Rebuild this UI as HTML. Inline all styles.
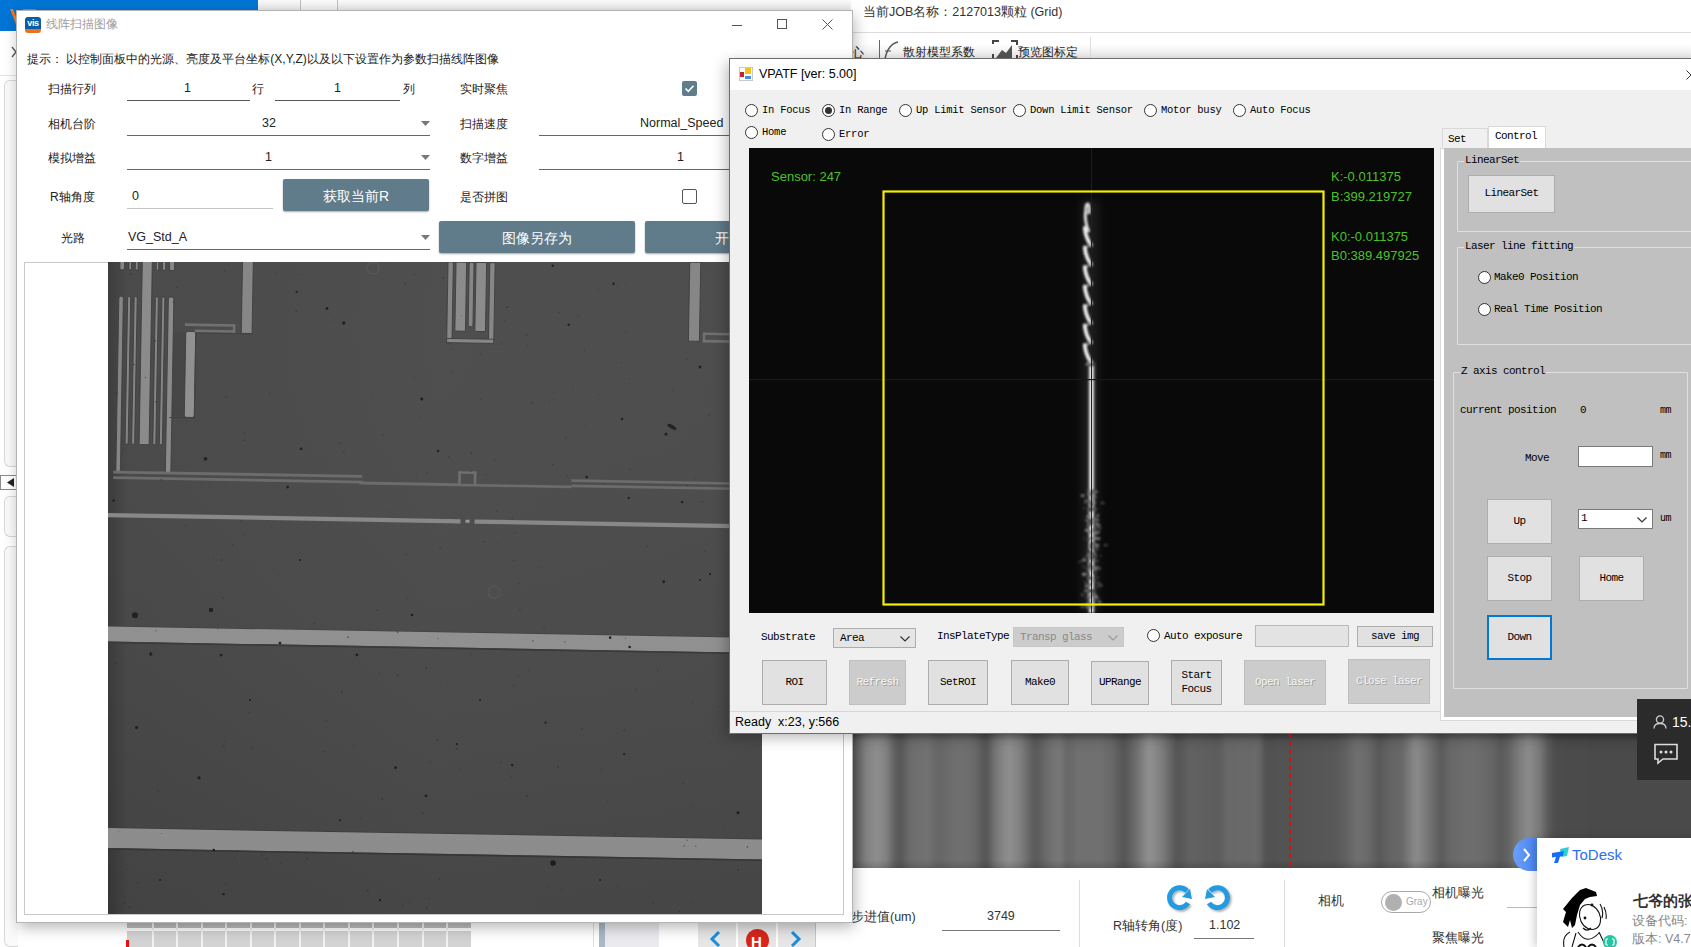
<!DOCTYPE html>
<html><head><meta charset="utf-8">
<style>
*{box-sizing:border-box;margin:0;padding:0}
html,body{width:1691px;height:947px;overflow:hidden;background:#fff}
body{position:relative;font-family:"Liberation Sans",sans-serif;font-size:13px;color:#222}
.a{position:absolute}
.mono{font-family:"Liberation Mono",monospace}
.t{position:absolute;white-space:nowrap;line-height:1}
</style></head><body>

<!-- ============ BACKGROUND APP ============ -->
<div class="a" style="left:0;top:0;width:258px;height:31px;background:#0175d5"></div>
<div class="a" style="left:258px;top:0;width:593px;height:11px;background:linear-gradient(#fafafa,#e6e6e6);border-bottom:1px solid #9a9a9a"></div>
<div class="a" style="left:300px;top:0;width:38px;height:11px;border:1px solid #bdbdbd;border-top:none;background:linear-gradient(#fbfbfb,#ececec)"></div>
<div class="t" style="left:863px;top:6px;font-size:12.5px;color:#333">当前JOB名称：2127013颗粒 (Grid)</div>
<div class="a" style="left:851px;top:32px;width:840px;height:28px;border-top:1px solid #dcdcdc;border-bottom:2px solid #8e8e8e;background:linear-gradient(#ffffff 40%,#ececec)"></div>
<!-- BG_START --><svg class="a" style="left:8px;top:7px" width="30" height="22"><path d="M2 2L9 20L12 20L5 2Z" fill="#ef7a22"/><rect x="15" y="2" width="13" height="4" fill="#e7772a" opacity=".8"/></svg>
<div class="a" style="left:0px;top:31px;width:17px;height:916px;background:#fff"></div>
<div class="a" style="left:4px;top:80px;width:14px;height:387px;border:1px solid #d8d8d8;border-right:none;border-radius:6px 0 0 6px;background:#fafafa"></div>
<div class="a" style="left:0px;top:475px;width:17px;height:15px;border:1px solid #8a8a8a;background:#fff"><svg class="a" style="left:6px;top:2px" width="7" height="9"><path d="M7 0L0 4.5L7 9Z" fill="#222"/></svg></div>
<div class="a" style="left:4px;top:496px;width:14px;height:41px;border:1px solid #d8d8d8;border-right:none;border-radius:6px 0 0 6px;background:#fafafa"></div>
<div class="a" style="left:4px;top:546px;width:14px;height:401px;border:1px solid #d8d8d8;border-right:none;border-radius:6px 0 0 6px;background:#fafafa"></div>
<div class="a" style="left:0px;top:75px;width:17px;height:1px;background:#e4e4e4"></div>
<svg class="a" style="left:11px;top:46px" width="6" height="12"><path d="M1 1L5 6L1 11" stroke="#555" stroke-width="1.3" fill="none"/></svg>
<div class="a" style="left:851px;top:733px;width:840px;height:135px;overflow:hidden"><div class="a" style="left:-10px;top:-10px;width:860px;height:155px;filter:blur(2px);background:linear-gradient(90deg,rgb(80,80,80) 0.00%,rgb(80,80,80) 1.16%,rgb(100,100,100) 1.74%,rgb(130,130,130) 2.91%,rgb(142,142,142) 4.19%,rgb(128,128,128) 5.35%,rgb(100,100,100) 6.05%,rgb(86,86,86) 6.86%,rgb(108,108,108) 8.02%,rgb(112,112,112) 9.19%,rgb(114,114,114) 10.12%,rgb(102,102,102) 11.16%,rgb(104,104,104) 11.98%,rgb(112,112,112) 13.26%,rgb(110,110,110) 15.00%,rgb(104,104,104) 15.70%,rgb(86,86,86) 16.63%,rgb(88,88,88) 17.09%,rgb(118,118,118) 17.91%,rgb(144,144,144) 19.53%,rgb(128,128,128) 20.81%,rgb(90,90,90) 22.44%,rgb(94,94,94) 23.02%,rgb(112,112,112) 24.30%,rgb(120,120,120) 25.47%,rgb(102,102,102) 26.28%,rgb(112,112,112) 27.44%,rgb(112,112,112) 30.12%,rgb(104,104,104) 31.51%,rgb(84,84,84) 32.91%,rgb(112,112,112) 34.42%,rgb(146,146,146) 35.81%,rgb(125,125,125) 37.33%,rgb(84,84,84) 39.07%,rgb(98,98,98) 40.58%,rgb(92,92,92) 43.95%,rgb(104,104,104) 44.77%,rgb(106,106,106) 48.60%,rgb(82,82,82) 49.30%,rgb(84,84,84) 53.37%,rgb(88,88,88) 57.44%,rgb(96,96,96) 58.60%,rgb(112,112,112) 60.00%,rgb(106,106,106) 61.28%,rgb(88,88,88) 62.56%,rgb(100,100,100) 63.84%,rgb(104,104,104) 65.23%,rgb(140,140,140) 66.86%,rgb(118,118,118) 68.26%,rgb(90,90,90) 69.77%,rgb(104,104,104) 70.81%,rgb(110,110,110) 73.14%,rgb(108,108,108) 74.30%,rgb(100,100,100) 75.93%,rgb(90,90,90) 76.63%,rgb(98,98,98) 77.56%,rgb(122,122,122) 78.72%,rgb(140,140,140) 80.00%,rgb(120,120,120) 81.28%,rgb(90,90,90) 82.21%,rgb(76,76,76) 83.14%,rgb(74,74,74) 88.26%,rgb(74,74,74) 98.84%,rgb(74,74,74) 100.00%)"></div></div>
<div class="a" style="left:851px;top:733px;width:840px;height:135px;background:linear-gradient(rgba(0,0,0,.25),rgba(0,0,0,0) 6%,rgba(0,0,0,0) 94%,rgba(0,0,0,.15))"></div>
<svg class="a" style="left:1289px;top:733px" width="2" height="135"><path d="M1 0V135" stroke="#e01010" stroke-width="2" stroke-dasharray="5 3"/></svg>
<div class="t" style="left:851px;top:911px;font-size:12.5px;color:#333">步进值(um)</div>
<div class="t" style="left:987px;top:910px;font-size:12.5px;color:#333">3749</div>
<div class="a" style="left:942px;top:930px;width:118px;height:1px;background:#777"></div>
<div class="a" style="left:1079px;top:880px;width:1px;height:67px;background:#ddd"></div>
<div class="a" style="left:1284px;top:880px;width:1px;height:67px;background:#ddd"></div>
<svg class="a" style="left:1163px;top:883px" width="75" height="30"><defs><filter id="rs" x="-30%" y="-30%" width="160%" height="160%"><feDropShadow dx="1.5" dy="1.5" stdDeviation="1" flood-opacity=".35"/></filter></defs><g filter="url(#rs)" fill="none" stroke="#229be0" stroke-width="5"><path d="M24 8A10 10 0 1 0 25 20"/><path d="M47 8A10 10 0 1 1 46 20"/></g><path d="M19 14L29 16L27 6Z" fill="#229be0"/><path d="M52 14L42 16L44 6Z" fill="#229be0"/></svg>
<div class="t" style="left:1113px;top:920px;font-size:12.5px;color:#333">R轴转角(度)</div>
<div class="t" style="left:1209px;top:919px;font-size:12.5px;color:#333">1.102</div>
<div class="a" style="left:1194px;top:938px;width:60px;height:1px;background:#777"></div>
<div class="t" style="left:1318px;top:895px;font-size:12.5px;color:#333">相机</div>
<div class="a" style="left:1381px;top:891px;width:50px;height:22px;border:1px solid #aaa;border-radius:11px;background:#fff"><div class="a" style="left:3px;top:2px;width:17px;height:17px;border-radius:50%;background:#b0b0b0"></div><div class="t" style="left:24px;top:5px;font-size:10px;color:#aaa">Gray</div></div>
<div class="t" style="left:1432px;top:887px;font-size:12.5px;color:#333">相机曝光</div>
<div class="t" style="left:1432px;top:932px;font-size:12.5px;color:#333">聚焦曝光</div>
<div class="a" style="left:1507px;top:907px;width:40px;height:1px;background:#bbb"></div>
<div class="a" style="left:127px;top:922px;width:344px;height:6px;background:#bdbdbd"></div>
<div class="a" style="left:127px;top:931px;width:344px;height:16px;background:#d3d3d3"></div>
<div class="a" style="left:152px;top:922px;width:2px;height:25px;background:#f2f2f2"></div>
<div class="a" style="left:176px;top:922px;width:2px;height:25px;background:#f2f2f2"></div>
<div class="a" style="left:201px;top:922px;width:2px;height:25px;background:#f2f2f2"></div>
<div class="a" style="left:225px;top:922px;width:2px;height:25px;background:#f2f2f2"></div>
<div class="a" style="left:250px;top:922px;width:2px;height:25px;background:#f2f2f2"></div>
<div class="a" style="left:274px;top:922px;width:2px;height:25px;background:#f2f2f2"></div>
<div class="a" style="left:299px;top:922px;width:2px;height:25px;background:#f2f2f2"></div>
<div class="a" style="left:323px;top:922px;width:2px;height:25px;background:#f2f2f2"></div>
<div class="a" style="left:348px;top:922px;width:2px;height:25px;background:#f2f2f2"></div>
<div class="a" style="left:372px;top:922px;width:2px;height:25px;background:#f2f2f2"></div>
<div class="a" style="left:397px;top:922px;width:2px;height:25px;background:#f2f2f2"></div>
<div class="a" style="left:422px;top:922px;width:2px;height:25px;background:#f2f2f2"></div>
<div class="a" style="left:446px;top:922px;width:2px;height:25px;background:#f2f2f2"></div>
<div class="a" style="left:126px;top:940px;width:3px;height:7px;background:#ee1010"></div>
<div class="a" style="left:593px;top:922px;width:1px;height:25px;background:#dedede"></div>
<div class="a" style="left:599px;top:922px;width:6px;height:25px;background:#a9b9c5"></div>
<div class="a" style="left:605px;top:922px;width:54px;height:25px;background:#ebebef"></div>
<div class="a" style="left:698px;top:922px;width:118px;height:25px;background:#e6e6e6;border-right:1px solid #c8c8c8"></div>
<div class="a" style="left:736px;top:922px;width:2px;height:25px;background:#fff"></div>
<div class="a" style="left:776px;top:922px;width:2px;height:25px;background:#fff"></div>
<svg class="a" style="left:708px;top:930px" width="14" height="17"><path d="M11 2L4 9L11 16" stroke="#1a8fdc" stroke-width="3" fill="none"/></svg>
<svg class="a" style="left:789px;top:930px" width="14" height="17"><path d="M3 2L10 9L3 16" stroke="#1a8fdc" stroke-width="3" fill="none"/></svg>
<div class="a" style="left:746px;top:929px;width:23px;height:23px;border-radius:50%;background:#d9251b"><div class="t" style="left:5px;top:5px;font-size:15px;font-weight:bold;color:#fff">H</div></div>
<div class="a" style="left:879px;top:40px;width:1px;height:19px;background:#666"></div>
<svg class="a" style="left:882px;top:40px" width="18" height="19"><path d="M3 19Q6 4 16 2" stroke="#555" stroke-width="1.5" fill="none"/><path d="M3 11H9" stroke="#555" stroke-width="1"/></svg>
<div class="t" style="left:903px;top:46px;font-size:12px;color:#222">散射模型系数</div>
<svg class="a" style="left:992px;top:39px" width="26" height="20"><path d="M1 5V2H7M19 2H25V6M1 15V19M25 16V19" stroke="#444" stroke-width="2" fill="none"/><path d="M4 19L10 11L14 14L20 6V19Z" fill="#555"/></svg>
<div class="t" style="left:1018px;top:46px;font-size:12px;color:#222">预览图标定</div>
<div class="a" style="left:1090px;top:37px;width:1px;height:22px;background:#e0e0e0"></div>
<div class="t" style="left:851px;top:46px;font-size:13px;color:#222;clip-path:inset(0 0 0 0)">心</div><!-- BG_END -->

<!-- ============ LEFT WINDOW ============ -->
<div class="a" style="left:17px;top:11px;width:835px;height:911px;background:#fff;box-shadow:0 0 0 1px #b4b4b4,2px 5px 14px rgba(0,0,0,.3)">
<div class="a" style="left:8px;top:6px;width:16px;height:16px;border-radius:3px;background:linear-gradient(#0d5ca8 78%,#e8731f 78%);color:#fff;font-size:9px;font-weight:bold;line-height:13px;text-align:center;letter-spacing:-0.3px">vis</div>
<div class="t" style="left:29px;top:7px;font-size:12px;color:#a0a0a0">线阵扫描图像</div>
<div class="a" style="left:715px;top:14px;width:10px;height:1px;background:#555"></div>
<div class="a" style="left:760px;top:8px;width:10px;height:10px;border:1px solid #555"></div>
<svg class="a" style="left:805px;top:8px" width="11" height="11"><path d="M0.5 0.5L10.5 10.5M10.5 0.5L0.5 10.5" stroke="#555" stroke-width="1"/></svg>
<div class="t" style="left:10px;top:42px;font-size:12px;color:#222">提示：&nbsp;以控制面板中的光源、亮度及平台坐标(X,Y,Z)以及以下设置作为参数扫描线阵图像</div>
<div class="t" style="left:31px;top:72px;font-size:12px;color:#222">扫描行列</div>
<div class="t" style="left:31px;top:107px;font-size:12px;color:#222">相机台阶</div>
<div class="t" style="left:31px;top:141px;font-size:12px;color:#222">模拟增益</div>
<div class="t" style="left:33px;top:180px;font-size:12px;color:#222">R轴角度</div>
<div class="t" style="left:44px;top:221px;font-size:12px;color:#222">光路</div>
<div class="t" style="left:443px;top:72px;font-size:12px;color:#222">实时聚焦</div>
<div class="t" style="left:443px;top:107px;font-size:12px;color:#222">扫描速度</div>
<div class="t" style="left:443px;top:141px;font-size:12px;color:#222">数字增益</div>
<div class="t" style="left:443px;top:180px;font-size:12px;color:#222">是否拼图</div>
<div class="a" style="left:110px;top:89px;width:123px;height:1px;background:#555"></div>
<div class="t" style="left:167px;top:71px;font-size:12.5px;color:#222">1</div>
<div class="t" style="left:235px;top:72px;font-size:12px;color:#222">行</div>
<div class="a" style="left:258px;top:89px;width:125px;height:1px;background:#555"></div>
<div class="t" style="left:317px;top:71px;font-size:12.5px;color:#222">1</div>
<div class="t" style="left:386px;top:72px;font-size:12px;color:#222">列</div>
<div class="a" style="left:665px;top:70px;width:15px;height:15px;border-radius:2px;background:#607d8b"><svg width="15" height="15"><path d="M3.5 7.5L6.3 10.3L11.5 4.8" stroke="#fff" stroke-width="1.6" fill="none"/></svg></div>
<div class="a" style="left:665px;top:178px;width:15px;height:15px;border:1.5px solid #555;border-radius:2px"></div>
<div class="a" style="left:110px;top:124px;width:303px;height:1px;background:#666"></div>
<div class="t" style="left:245px;top:106px;font-size:12.5px;color:#222">32</div>
<svg class="a" style="left:404px;top:110px" width="9" height="5"><path d="M0 0H9L4.5 5Z" fill="#777"/></svg>
<div class="a" style="left:110px;top:158px;width:303px;height:1px;background:#666"></div>
<div class="t" style="left:248px;top:140px;font-size:12.5px;color:#222">1</div>
<svg class="a" style="left:404px;top:144px" width="9" height="5"><path d="M0 0H9L4.5 5Z" fill="#777"/></svg>
<div class="a" style="left:110px;top:238px;width:303px;height:1px;background:#666"></div>
<div class="t" style="left:111px;top:220px;font-size:12.5px;color:#222">VG_Std_A</div>
<svg class="a" style="left:404px;top:224px" width="9" height="5"><path d="M0 0H9L4.5 5Z" fill="#777"/></svg>
<div class="a" style="left:110px;top:197px;width:146px;height:1px;background:#c4c4c4"></div>
<div class="t" style="left:115px;top:179px;font-size:12.5px;color:#222">0</div>
<div class="a" style="left:522px;top:124px;width:200px;height:1px;background:#666"></div>
<div class="t" style="left:623px;top:106px;font-size:12.5px;color:#222">Normal_Speed</div>
<div class="a" style="left:522px;top:158px;width:200px;height:1px;background:#666"></div>
<div class="t" style="left:660px;top:140px;font-size:12.5px;color:#222">1</div>
<div class="a" style="left:266px;top:168px;width:146px;height:32px;background:#607b89;border-radius:2px;box-shadow:0 1px 2px rgba(0,0,0,.35)"></div>
<div class="t" style="left:306px;top:178px;font-size:14px;color:#fff">获取当前R</div>
<div class="a" style="left:422px;top:210px;width:196px;height:32px;background:#607b89;border-radius:2px;box-shadow:0 1px 2px rgba(0,0,0,.35)"></div>
<div class="t" style="left:485px;top:220px;font-size:14px;color:#fff">图像另存为</div>
<div class="a" style="left:628px;top:210px;width:120px;height:32px;background:#607b89;border-radius:2px;box-shadow:0 1px 2px rgba(0,0,0,.35)"></div>
<div class="t" style="left:698px;top:220px;font-size:14px;color:#fff">开始</div>
<div class="a" style="left:7px;top:251px;width:820px;height:653px;border:1px solid #c8c8c8;background:#fff"></div>
<!-- MICRO_START --><svg class="a" style="left:91px;top:251px" width="654" height="652" viewBox="0 0 654 652">
<defs><linearGradient id="mv" x1="0" x2="1" y1="0" y2="0"><stop offset="0" stop-color="#393939"/><stop offset="0.03" stop-color="#474747"/><stop offset="0.5" stop-color="#4b4b4b"/><stop offset="1" stop-color="#4a4a4a"/></linearGradient>
<linearGradient id="mh" x1="0" x2="0" y1="0" y2="1"><stop offset="0" stop-color="#fff" stop-opacity="0.02"/><stop offset="1" stop-color="#000" stop-opacity="0.06"/></linearGradient></defs>
<rect width="654" height="652" fill="url(#mv)"/>
<g transform="rotate(1)">
<rect x="65.0" y="69.0" width="14.0" height="86.0" fill="#434343" />
<rect x="11.5" y="34.0" width="4.5" height="176.0" fill="#848484" rx="2" stroke="#3a3a3a" stroke-width="0.9"/>
<rect x="20.3" y="34.0" width="3.0" height="148.0" fill="#848484" rx="1.5" stroke="#3a3a3a" stroke-width="0.9"/>
<rect x="26.8" y="34.0" width="3.0" height="148.0" fill="#848484" rx="1.5" stroke="#3a3a3a" stroke-width="0.9"/>
<rect x="48.0" y="34.0" width="3.0" height="148.0" fill="#848484" rx="1.5" stroke="#3a3a3a" stroke-width="0.9"/>
<rect x="54.5" y="34.0" width="3.0" height="148.0" fill="#848484" rx="1.5" stroke="#3a3a3a" stroke-width="0.9"/>
<rect x="34.3" y="-5.0" width="10.0" height="187.0" fill="#898989" rx="1" stroke="#3a3a3a" stroke-width="0.9"/>
<rect x="61.0" y="34.0" width="5.5" height="176.0" fill="#898989" rx="2" stroke="#3a3a3a" stroke-width="0.9"/>
<rect x="12.0" y="-5.0" width="4.6" height="12.5" fill="#848484" rx="1.5" stroke="#3a3a3a" stroke-width="0.9"/>
<rect x="21.0" y="-5.0" width="2.6" height="12.5" fill="#848484" rx="1.5" stroke="#3a3a3a" stroke-width="0.9"/>
<rect x="27.4" y="-5.0" width="2.8" height="12.5" fill="#848484" rx="1.5" stroke="#3a3a3a" stroke-width="0.9"/>
<rect x="48.3" y="-5.0" width="2.5" height="12.5" fill="#848484" rx="1.5" stroke="#3a3a3a" stroke-width="0.9"/>
<rect x="54.6" y="-5.0" width="3.2" height="12.5" fill="#848484" rx="1.5" stroke="#3a3a3a" stroke-width="0.9"/>
<rect x="61.6" y="-5.0" width="5.1" height="12.5" fill="#848484" rx="1.5" stroke="#3a3a3a" stroke-width="0.9"/>
<rect x="79.0" y="68.0" width="10.0" height="86.0" fill="#8f8f8f" rx="2" stroke="#3a3a3a" stroke-width="0.9"/>
<rect x="78.0" y="60.0" width="50.0" height="2.6" fill="#6e6e6e" />
<rect x="88.0" y="66.0" width="40.0" height="2.6" fill="#6e6e6e" />
<rect x="126.0" y="60.0" width="2.5" height="9.0" fill="#6e6e6e" />
<rect x="134.5" y="-5.0" width="10.8" height="74.0" fill="#848484" stroke="#3a3a3a" stroke-width="0.9"/>
<rect x="89.0" y="69.0" width="56.0" height="1.0" fill="#3e3e3e" />
<rect x="88.5" y="69.0" width="1.0" height="86.0" fill="#3e3e3e" />
<rect x="64.0" y="154.0" width="25.0" height="1.0" fill="#3e3e3e" />
<rect x="9.0" y="208.5" width="249.0" height="2.8" fill="#6a6a6a" />
<rect x="9.0" y="214.2" width="250.0" height="2.8" fill="#6a6a6a" />
<rect x="255.0" y="215.2" width="100.0" height="2.8" fill="#6a6a6a" />
<rect x="354.0" y="203.0" width="2.6" height="14.0" fill="#6e6e6e" />
<rect x="354.0" y="203.0" width="18.0" height="2.6" fill="#6e6e6e" />
<rect x="369.5" y="203.0" width="2.6" height="14.0" fill="#6e6e6e" />
<rect x="355.0" y="215.5" width="112.0" height="2.6" fill="#6a6a6a" />
<rect x="467.0" y="209.2" width="200.0" height="2.6" fill="#6a6a6a" />
<rect x="467.0" y="214.5" width="200.0" height="2.6" fill="#6a6a6a" />
<rect x="340.0" y="-6.0" width="5.3" height="81.0" fill="#848484" stroke="#3a3a3a" stroke-width="0.9"/>
<rect x="381.8" y="-6.0" width="5.3" height="81.0" fill="#848484" stroke="#3a3a3a" stroke-width="0.9"/>
<rect x="340.0" y="70.5" width="47.0" height="4.2" fill="#848484" stroke="#3a3a3a" stroke-width="0.9"/>
<rect x="348.0" y="-6.0" width="10.6" height="69.0" fill="#898989" stroke="#3a3a3a" stroke-width="0.9"/>
<rect x="368.0" y="-6.0" width="10.6" height="69.0" fill="#898989" stroke="#3a3a3a" stroke-width="0.9"/>
<rect x="361.2" y="-6.0" width="4.8" height="64.5" fill="#848484" rx="2" stroke="#3a3a3a" stroke-width="0.9"/>
<rect x="581.7" y="-10.0" width="11.0" height="79.0" fill="#848484" stroke="#3a3a3a" stroke-width="0.9"/>
<rect x="597.0" y="60.0" width="110.0" height="2.5" fill="#6e6e6e" />
<rect x="597.0" y="67.4" width="110.0" height="2.6" fill="#6e6e6e" />
<rect x="596.0" y="60.0" width="2.5" height="10.0" fill="#6e6e6e" />
<rect x="-5.0" y="251.0" width="362.0" height="4.2" fill="#888" />
<rect x="371.0" y="251.0" width="300.0" height="4.2" fill="#888" />
<rect x="362.0" y="251.5" width="4.0" height="3.0" fill="#999" />
<rect x="-5.0" y="363.8" width="680.0" height="1.2" fill="#404040" />
<rect x="-5.0" y="364.5" width="680.0" height="15.0" fill="#929292" />
<rect x="-5.0" y="379.5" width="680.0" height="1.6" fill="#383838" />
<rect x="-5.0" y="565.2" width="680.0" height="1.2" fill="#404040" />
<rect x="-5.0" y="566.0" width="680.0" height="20.0" fill="#939393" />
<rect x="-5.0" y="586.0" width="680.0" height="1.6" fill="#383838" />
<circle cx="33.1" cy="352.7" r="3" fill="#1e1e1e"/>
<circle cx="109.1" cy="346.2" r="2.2" fill="#1e1e1e"/>
<circle cx="49.6" cy="391.3" r="1.6" fill="#1e1e1e"/>
<circle cx="119.9" cy="391.0" r="1.4" fill="#1e1e1e"/>
<circle cx="255.7" cy="388.5" r="1.4" fill="#1e1e1e"/>
<circle cx="36.6" cy="465.0" r="1.6" fill="#1e1e1e"/>
<circle cx="100.0" cy="514.2" r="1.6" fill="#1e1e1e"/>
<circle cx="327.3" cy="528.3" r="1.4" fill="#1e1e1e"/>
<circle cx="296.4" cy="500.6" r="1.4" fill="#1e1e1e"/>
<circle cx="310.2" cy="347.7" r="1.3" fill="#1e1e1e"/>
<circle cx="178.6" cy="378.0" r="1.4" fill="#1e1e1e"/>
<circle cx="116.0" cy="586.2" r="1.3" fill="#1e1e1e"/>
<circle cx="126.5" cy="630.0" r="1.2" fill="#1e1e1e"/>
<circle cx="561.2" cy="310.0" r="1.5" fill="#1e1e1e"/>
<circle cx="508.6" cy="366.8" r="1.3" fill="#1e1e1e"/>
<circle cx="528.3" cy="375.9" r="1.3" fill="#1e1e1e"/>
<circle cx="455.5" cy="593.2" r="2.8" fill="#1e1e1e"/>
<circle cx="639.6" cy="539.6" r="1.5" fill="#1e1e1e"/>
<circle cx="412.8" cy="496.0" r="1.2" fill="#1e1e1e"/>
<circle cx="524.6" cy="483.0" r="1.1" fill="#1e1e1e"/>
<circle cx="445.5" cy="453.0" r="1.1" fill="#1e1e1e"/>
<circle cx="357.2" cy="475.9" r="1.1" fill="#1e1e1e"/>
<circle cx="607.4" cy="301.5" r="1.1" fill="#1e1e1e"/>
<circle cx="560.9" cy="162.3" r="1.6" fill="#1e1e1e"/>
<circle cx="593.8" cy="94.7" r="1.5" fill="#1e1e1e"/>
<circle cx="505.9" cy="12.9" r="1.3" fill="#1e1e1e"/>
<circle cx="461.7" cy="54.7" r="1.2" fill="#1e1e1e"/>
<circle cx="316.4" cy="131.5" r="1.3" fill="#1e1e1e"/>
<circle cx="333.3" cy="183.2" r="1.3" fill="#1e1e1e"/>
<circle cx="516.7" cy="148.0" r="1.3" fill="#1e1e1e"/>
<circle cx="482.4" cy="206.6" r="1.3" fill="#1e1e1e"/>
<circle cx="578.2" cy="230.0" r="1.3" fill="#1e1e1e"/>
<circle cx="524.7" cy="226.8" r="1.2" fill="#1e1e1e"/>
<circle cx="444.7" cy="-4.1" r="1.2" fill="#1e1e1e"/>
<circle cx="219.8" cy="42.6" r="1.5" fill="#1e1e1e"/>
<circle cx="236.8" cy="56.9" r="1.7" fill="#1e1e1e"/>
<circle cx="316.0" cy="131.5" r="1.4" fill="#1e1e1e"/>
<circle cx="196.3" cy="183.4" r="1.4" fill="#1e1e1e"/>
<circle cx="100.9" cy="195.1" r="1.9" fill="#1e1e1e"/>
<circle cx="9.7" cy="238.5" r="1.3" fill="#1e1e1e"/>
<circle cx="189.2" cy="26.5" r="1.1" fill="#1e1e1e"/>
<circle cx="183.5" cy="221.9" r="1.4" fill="#1e1e1e"/>
<circle cx="597.5" cy="307.7" r="1" fill="#1e1e1e"/>
<circle cx="379.6" cy="431.5" r="1" fill="#1e1e1e"/>
<circle cx="197.2" cy="294.6" r="1" fill="#1e1e1e"/>
<circle cx="149.6" cy="435.5" r="1" fill="#1e1e1e"/>
<circle cx="241.7" cy="554.0" r="1" fill="#1e1e1e"/>
<circle cx="502.8" cy="609.4" r="1" fill="#1e1e1e"/>
<circle cx="62.8" cy="617.1" r="1" fill="#1e1e1e"/>
<circle cx="283.1" cy="633.3" r="1.1" fill="#1e1e1e"/>
<circle cx="295.9" cy="365.0" r="1.0" fill="#2e2e2e" opacity="0.55"/>
<circle cx="304.5" cy="331.1" r="0.8" fill="#2e2e2e" opacity="0.55"/>
<circle cx="120.8" cy="333.8" r="0.8" fill="#2e2e2e" opacity="0.55"/>
<circle cx="518.6" cy="61.4" r="0.7" fill="#2e2e2e" opacity="0.55"/>
<circle cx="59.3" cy="527.9" r="0.8" fill="#2e2e2e" opacity="0.55"/>
<circle cx="27.4" cy="640.4" r="1.0" fill="#2e2e2e" opacity="0.55"/>
<circle cx="427.7" cy="401.3" r="0.6" fill="#2e2e2e" opacity="0.55"/>
<circle cx="9.8" cy="344.5" r="0.5" fill="#2e2e2e" opacity="0.55"/>
<circle cx="124.4" cy="157.7" r="0.5" fill="#2e2e2e" opacity="0.55"/>
<circle cx="303.4" cy="287.2" r="0.9" fill="#2e2e2e" opacity="0.55"/>
<circle cx="339.5" cy="417.5" r="0.7" fill="#2e2e2e" opacity="0.55"/>
<circle cx="433.2" cy="298.2" r="0.6" fill="#2e2e2e" opacity="0.55"/>
<circle cx="652.5" cy="649.2" r="0.9" fill="#2e2e2e" opacity="0.55"/>
<circle cx="462.9" cy="205.6" r="0.6" fill="#2e2e2e" opacity="0.55"/>
<circle cx="189.0" cy="45.8" r="0.9" fill="#2e2e2e" opacity="0.55"/>
<circle cx="261.9" cy="552.0" r="0.7" fill="#2e2e2e" opacity="0.55"/>
<circle cx="626.6" cy="552.4" r="0.5" fill="#2e2e2e" opacity="0.55"/>
<circle cx="137.2" cy="593.5" r="0.7" fill="#2e2e2e" opacity="0.55"/>
<circle cx="641.2" cy="259.1" r="0.5" fill="#2e2e2e" opacity="0.55"/>
<circle cx="411.7" cy="507.6" r="0.6" fill="#2e2e2e" opacity="0.55"/>
<circle cx="57.0" cy="216.8" r="1.0" fill="#2e2e2e" opacity="0.55"/>
<circle cx="495.8" cy="76.9" r="0.6" fill="#2e2e2e" opacity="0.55"/>
<circle cx="66.1" cy="39.1" r="0.9" fill="#2e2e2e" opacity="0.55"/>
<circle cx="116.2" cy="364.7" r="0.7" fill="#2e2e2e" opacity="0.55"/>
<circle cx="124.7" cy="477.2" r="0.6" fill="#2e2e2e" opacity="0.55"/>
<circle cx="421.0" cy="76.0" r="0.7" fill="#2e2e2e" opacity="0.55"/>
<circle cx="139.2" cy="175.9" r="1.0" fill="#2e2e2e" opacity="0.55"/>
<circle cx="525.4" cy="198.3" r="0.9" fill="#2e2e2e" opacity="0.55"/>
<circle cx="137.8" cy="257.1" r="0.9" fill="#2e2e2e" opacity="0.55"/>
<circle cx="419.8" cy="65.4" r="1.0" fill="#2e2e2e" opacity="0.55"/>
<circle cx="139.5" cy="168.4" r="0.9" fill="#2e2e2e" opacity="0.55"/>
<circle cx="215.1" cy="193.2" r="0.5" fill="#2e2e2e" opacity="0.55"/>
<circle cx="58.9" cy="379.9" r="0.6" fill="#2e2e2e" opacity="0.55"/>
<circle cx="393.2" cy="242.4" r="0.7" fill="#2e2e2e" opacity="0.55"/>
<circle cx="627.3" cy="315.4" r="0.8" fill="#2e2e2e" opacity="0.55"/>
<circle cx="566.7" cy="119.2" r="0.6" fill="#2e2e2e" opacity="0.55"/>
<circle cx="594.1" cy="533.2" r="0.6" fill="#2e2e2e" opacity="0.55"/>
<circle cx="124.1" cy="482.1" r="1.0" fill="#2e2e2e" opacity="0.55"/>
<circle cx="128.6" cy="619.5" r="0.9" fill="#2e2e2e" opacity="0.55"/>
<circle cx="394.7" cy="274.8" r="0.6" fill="#2e2e2e" opacity="0.55"/>
<circle cx="25.3" cy="627.7" r="0.6" fill="#2e2e2e" opacity="0.55"/>
<circle cx="460.8" cy="167.6" r="0.9" fill="#2e2e2e" opacity="0.55"/>
<circle cx="390.1" cy="191.3" r="0.6" fill="#2e2e2e" opacity="0.55"/>
<circle cx="471.1" cy="44.8" r="0.6" fill="#2e2e2e" opacity="0.55"/>
<circle cx="365.8" cy="555.8" r="0.8" fill="#2e2e2e" opacity="0.55"/>
<circle cx="183.3" cy="598.1" r="0.6" fill="#2e2e2e" opacity="0.55"/>
<circle cx="10.8" cy="175.5" r="0.7" fill="#2e2e2e" opacity="0.55"/>
<circle cx="39.5" cy="114.9" r="0.7" fill="#2e2e2e" opacity="0.55"/>
<circle cx="374.2" cy="85.8" r="0.7" fill="#2e2e2e" opacity="0.55"/>
<circle cx="582.7" cy="639.3" r="0.8" fill="#2e2e2e" opacity="0.55"/>
<circle cx="452.1" cy="381.1" r="0.6" fill="#2e2e2e" opacity="0.55"/>
<circle cx="22.9" cy="11.7" r="1.0" fill="#2e2e2e" opacity="0.55"/>
<circle cx="458.4" cy="627.7" r="0.5" fill="#2e2e2e" opacity="0.55"/>
<circle cx="416.1" cy="314.4" r="0.9" fill="#2e2e2e" opacity="0.55"/>
<circle cx="208.6" cy="651.6" r="0.5" fill="#2e2e2e" opacity="0.55"/>
<circle cx="357.1" cy="480.5" r="1.0" fill="#2e2e2e" opacity="0.55"/>
<circle cx="482.1" cy="458.8" r="0.9" fill="#2e2e2e" opacity="0.55"/>
<circle cx="598.4" cy="229.4" r="0.8" fill="#2e2e2e" opacity="0.55"/>
<circle cx="589.1" cy="568.0" r="0.7" fill="#2e2e2e" opacity="0.55"/>
<circle cx="517.0" cy="563.0" r="0.8" fill="#2e2e2e" opacity="0.55"/>
<circle cx="408.7" cy="249.3" r="0.8" fill="#2e2e2e" opacity="0.55"/>
<circle cx="398.2" cy="52.3" r="0.8" fill="#2e2e2e" opacity="0.55"/>
<circle cx="649.6" cy="573.6" r="0.9" fill="#2e2e2e" opacity="0.55"/>
<circle cx="254.0" cy="479.2" r="0.8" fill="#2e2e2e" opacity="0.55"/>
<circle cx="288.1" cy="546.6" r="0.5" fill="#2e2e2e" opacity="0.55"/>
<circle cx="490.6" cy="19.4" r="0.8" fill="#2e2e2e" opacity="0.55"/>
<circle cx="314.5" cy="150.1" r="0.8" fill="#2e2e2e" opacity="0.55"/>
<circle cx="325.2" cy="400.7" r="1.0" fill="#2e2e2e" opacity="0.55"/>
<circle cx="167.3" cy="7.4" r="0.7" fill="#2e2e2e" opacity="0.55"/>
<circle cx="443.5" cy="132.1" r="0.6" fill="#2e2e2e" opacity="0.55"/>
<circle cx="592.3" cy="430.3" r="0.7" fill="#2e2e2e" opacity="0.55"/>
<circle cx="583.2" cy="213.2" r="0.8" fill="#2e2e2e" opacity="0.55"/>
<circle cx="129.8" cy="280.9" r="0.9" fill="#2e2e2e" opacity="0.55"/>
<circle cx="597.9" cy="573.9" r="0.7" fill="#2e2e2e" opacity="0.55"/>
<circle cx="381.4" cy="206.3" r="0.6" fill="#2e2e2e" opacity="0.55"/>
<circle cx="324.7" cy="545.8" r="0.9" fill="#2e2e2e" opacity="0.55"/>
<circle cx="465.1" cy="619.4" r="0.6" fill="#2e2e2e" opacity="0.55"/>
<circle cx="110.6" cy="293.8" r="0.6" fill="#2e2e2e" opacity="0.55"/>
<circle cx="140.0" cy="269.9" r="0.8" fill="#2e2e2e" opacity="0.55"/>
<circle cx="323.0" cy="205.6" r="0.9" fill="#2e2e2e" opacity="0.55"/>
<circle cx="642.3" cy="295.0" r="0.5" fill="#2e2e2e" opacity="0.55"/>
<circle cx="20.6" cy="569.1" r="0.5" fill="#2e2e2e" opacity="0.55"/>
<circle cx="463.4" cy="372.0" r="0.7" fill="#2e2e2e" opacity="0.55"/>
<circle cx="517.6" cy="12.5" r="0.6" fill="#2e2e2e" opacity="0.55"/>
<circle cx="297.5" cy="16.1" r="0.9" fill="#2e2e2e" opacity="0.55"/>
<circle cx="155.3" cy="91.9" r="0.5" fill="#2e2e2e" opacity="0.55"/>
<circle cx="411.5" cy="291.1" r="0.8" fill="#2e2e2e" opacity="0.55"/>
<circle cx="428.4" cy="526.4" r="1.0" fill="#2e2e2e" opacity="0.55"/>
<circle cx="447.7" cy="130.0" r="0.7" fill="#2e2e2e" opacity="0.55"/>
<circle cx="116.9" cy="7.0" r="0.7" fill="#2e2e2e" opacity="0.55"/>
<circle cx="467.1" cy="116.8" r="0.6" fill="#2e2e2e" opacity="0.55"/>
<circle cx="226.1" cy="454.6" r="0.8" fill="#2e2e2e" opacity="0.55"/>
<circle cx="401.8" cy="493.0" r="0.7" fill="#2e2e2e" opacity="0.55"/>
<circle cx="517.9" cy="590.9" r="0.5" fill="#2e2e2e" opacity="0.55"/>
<circle cx="609.9" cy="471.0" r="0.6" fill="#2e2e2e" opacity="0.55"/>
<circle cx="296.6" cy="407.9" r="1.0" fill="#2e2e2e" opacity="0.55"/>
<circle cx="246.4" cy="370.9" r="0.9" fill="#2e2e2e" opacity="0.55"/>
<circle cx="521.1" cy="615.7" r="0.7" fill="#2e2e2e" opacity="0.55"/>
<circle cx="426.0" cy="133.6" r="0.9" fill="#2e2e2e" opacity="0.55"/>
<circle cx="535.2" cy="418.3" r="0.9" fill="#2e2e2e" opacity="0.55"/>
<circle cx="139.5" cy="586.8" r="1.0" fill="#2e2e2e" opacity="0.55"/>
<circle cx="639.2" cy="350.1" r="0.9" fill="#2e2e2e" opacity="0.55"/>
<circle cx="209.5" cy="593.3" r="0.9" fill="#2e2e2e" opacity="0.55"/>
<circle cx="227.9" cy="54.0" r="0.7" fill="#2e2e2e" opacity="0.55"/>
<circle cx="359.9" cy="500.9" r="0.7" fill="#2e2e2e" opacity="0.55"/>
<circle cx="18.6" cy="527.6" r="0.5" fill="#2e2e2e" opacity="0.55"/>
<circle cx="523.1" cy="112.7" r="0.7" fill="#2e2e2e" opacity="0.55"/>
<circle cx="515.3" cy="91.6" r="0.6" fill="#2e2e2e" opacity="0.55"/>
<circle cx="337.8" cy="471.8" r="0.9" fill="#2e2e2e" opacity="0.55"/>
<circle cx="450.8" cy="616.6" r="0.7" fill="#2e2e2e" opacity="0.55"/>
<circle cx="620.7" cy="56.1" r="0.6" fill="#2e2e2e" opacity="0.55"/>
<circle cx="344.4" cy="189.2" r="0.9" fill="#2e2e2e" opacity="0.55"/>
<circle cx="417.8" cy="340.9" r="0.9" fill="#2e2e2e" opacity="0.55"/>
<circle cx="366.2" cy="203.2" r="0.7" fill="#2e2e2e" opacity="0.55"/>
<circle cx="552.8" cy="587.1" r="0.6" fill="#2e2e2e" opacity="0.55"/>
<circle cx="556.4" cy="631.4" r="0.8" fill="#2e2e2e" opacity="0.55"/>
<circle cx="374.7" cy="131.0" r="0.8" fill="#2e2e2e" opacity="0.55"/>
<circle cx="329.1" cy="394.6" r="0.5" fill="#2e2e2e" opacity="0.55"/>
<circle cx="634.0" cy="336.4" r="0.7" fill="#2e2e2e" opacity="0.55"/>
<circle cx="523.9" cy="367.0" r="0.7" fill="#2e2e2e" opacity="0.55"/>
<circle cx="451.9" cy="43.0" r="0.8" fill="#2e2e2e" opacity="0.55"/>
<circle cx="270.6" cy="623.9" r="1.0" fill="#2e2e2e" opacity="0.55"/>
<circle cx="176.1" cy="308.5" r="0.6" fill="#2e2e2e" opacity="0.55"/>
<circle cx="283.6" cy="531.8" r="1.0" fill="#2e2e2e" opacity="0.55"/>
<circle cx="311.7" cy="206.8" r="0.6" fill="#2e2e2e" opacity="0.55"/>
<circle cx="404.1" cy="603.3" r="0.6" fill="#2e2e2e" opacity="0.55"/>
<circle cx="509.7" cy="14.9" r="0.6" fill="#2e2e2e" opacity="0.55"/>
<circle cx="148.6" cy="447.9" r="0.7" fill="#2e2e2e" opacity="0.55"/>
<circle cx="232.4" cy="404.1" r="0.6" fill="#2e2e2e" opacity="0.55"/>
<circle cx="478.0" cy="80.1" r="0.8" fill="#2e2e2e" opacity="0.55"/>
<circle cx="163.9" cy="128.9" r="0.8" fill="#2e2e2e" opacity="0.55"/>
<circle cx="285.7" cy="245.0" r="0.7" fill="#2e2e2e" opacity="0.55"/>
<circle cx="346.2" cy="104.1" r="0.6" fill="#2e2e2e" opacity="0.55"/>
<circle cx="412.9" cy="416.3" r="0.8" fill="#2e2e2e" opacity="0.55"/>
<circle cx="556.7" cy="398.8" r="0.9" fill="#2e2e2e" opacity="0.55"/>
<circle cx="152.2" cy="483.0" r="0.9" fill="#2e2e2e" opacity="0.55"/>
<circle cx="590.4" cy="205.9" r="0.7" fill="#2e2e2e" opacity="0.55"/>
<circle cx="603.5" cy="142.2" r="1.0" fill="#2e2e2e" opacity="0.55"/>
<circle cx="580.5" cy="87.3" r="0.6" fill="#2e2e2e" opacity="0.55"/>
<circle cx="475.2" cy="169.2" r="0.5" fill="#2e2e2e" opacity="0.55"/>
<circle cx="544.2" cy="274.9" r="0.9" fill="#2e2e2e" opacity="0.55"/>
<circle cx="82.4" cy="262.6" r="0.8" fill="#2e2e2e" opacity="0.55"/>
<circle cx="11.6" cy="131.0" r="0.8" fill="#2e2e2e" opacity="0.55"/>
<circle cx="596.0" cy="631.4" r="0.6" fill="#2e2e2e" opacity="0.55"/>
<circle cx="330.7" cy="494.3" r="0.8" fill="#2e2e2e" opacity="0.55"/>
<circle cx="448.4" cy="123.2" r="0.5" fill="#2e2e2e" opacity="0.55"/>
<circle cx="69.4" cy="24.4" r="0.8" fill="#2e2e2e" opacity="0.55"/>
<circle cx="336.7" cy="370.8" r="0.6" fill="#2e2e2e" opacity="0.55"/>
<circle cx="120.7" cy="133.0" r="0.9" fill="#2e2e2e" opacity="0.55"/>
<circle cx="647.7" cy="604.3" r="0.5" fill="#2e2e2e" opacity="0.55"/>
<circle cx="40.5" cy="620.4" r="0.7" fill="#2e2e2e" opacity="0.55"/>
<circle cx="500.1" cy="213.1" r="0.7" fill="#2e2e2e" opacity="0.55"/>
<circle cx="337.0" cy="280.4" r="0.8" fill="#2e2e2e" opacity="0.55"/>
<circle cx="8.7" cy="457.1" r="0.9" fill="#2e2e2e" opacity="0.55"/>
<circle cx="118.6" cy="296.0" r="0.9" fill="#2e2e2e" opacity="0.55"/>
<circle cx="265.1" cy="127.2" r="0.6" fill="#2e2e2e" opacity="0.55"/>
<circle cx="335.2" cy="10.1" r="0.9" fill="#2e2e2e" opacity="0.55"/>
<circle cx="524.3" cy="459.4" r="0.9" fill="#2e2e2e" opacity="0.55"/>
<circle cx="411.6" cy="263.7" r="0.8" fill="#2e2e2e" opacity="0.55"/>
<circle cx="329.8" cy="640.7" r="0.9" fill="#2e2e2e" opacity="0.55"/>
<circle cx="168.9" cy="594.2" r="0.9" fill="#2e2e2e" opacity="0.55"/>
<circle cx="508.8" cy="531.1" r="0.7" fill="#2e2e2e" opacity="0.55"/>
<circle cx="586.3" cy="573.7" r="0.8" fill="#2e2e2e" opacity="0.55"/>
<circle cx="501.8" cy="498.9" r="0.7" fill="#2e2e2e" opacity="0.55"/>
<circle cx="472.6" cy="46.0" r="0.7" fill="#2e2e2e" opacity="0.55"/>
<circle cx="306.6" cy="6.9" r="0.7" fill="#2e2e2e" opacity="0.55"/>
<circle cx="417.7" cy="406.9" r="0.6" fill="#2e2e2e" opacity="0.55"/>
<circle cx="617.8" cy="434.3" r="0.7" fill="#2e2e2e" opacity="0.55"/>
<circle cx="431.5" cy="371.4" r="0.8" fill="#2e2e2e" opacity="0.55"/>
<circle cx="254.8" cy="651.9" r="0.8" fill="#2e2e2e" opacity="0.55"/>
<circle cx="458.6" cy="496.7" r="1.0" fill="#2e2e2e" opacity="0.55"/>
<circle cx="14.9" cy="401.2" r="0.9" fill="#2e2e2e" opacity="0.55"/>
<circle cx="167.8" cy="261.8" r="0.5" fill="#2e2e2e" opacity="0.55"/>
<circle cx="127.8" cy="244.9" r="0.5" fill="#2e2e2e" opacity="0.55"/>
<circle cx="164.1" cy="590.5" r="0.8" fill="#2e2e2e" opacity="0.55"/>
<circle cx="332.1" cy="630.6" r="0.8" fill="#2e2e2e" opacity="0.55"/>
<circle cx="650.8" cy="416.0" r="0.9" fill="#2e2e2e" opacity="0.55"/>
<circle cx="49.8" cy="389.6" r="0.9" fill="#2e2e2e" opacity="0.55"/>
<circle cx="29.5" cy="606.5" r="0.6" fill="#2e2e2e" opacity="0.55"/>
<circle cx="308.5" cy="110.3" r="0.7" fill="#2e2e2e" opacity="0.55"/>
<circle cx="399.7" cy="38.2" r="1.0" fill="#2e2e2e" opacity="0.55"/>
<circle cx="275.1" cy="343.4" r="0.8" fill="#2e2e2e" opacity="0.55"/>
<circle cx="239.1" cy="186.3" r="0.8" fill="#2e2e2e" opacity="0.55"/>
<circle cx="366.7" cy="184.9" r="0.9" fill="#2e2e2e" opacity="0.55"/>
<circle cx="193.6" cy="9.1" r="0.6" fill="#2e2e2e" opacity="0.55"/>
<circle cx="28.0" cy="102.1" r="0.9" fill="#2e2e2e" opacity="0.55"/>
<circle cx="255.0" cy="585.2" r="0.9" fill="#2e2e2e" opacity="0.55"/>
<circle cx="32.8" cy="644.7" r="1.0" fill="#2e2e2e" opacity="0.55"/>
<circle cx="48.1" cy="590.4" r="0.7" fill="#2e2e2e" opacity="0.55"/>
<circle cx="312.4" cy="634.5" r="0.6" fill="#2e2e2e" opacity="0.55"/>
<circle cx="342.3" cy="611.1" r="0.9" fill="#2e2e2e" opacity="0.55"/>
<circle cx="306.3" cy="638.2" r="0.9" fill="#2e2e2e" opacity="0.55"/>
<circle cx="394.8" cy="75.0" r="0.8" fill="#2e2e2e" opacity="0.55"/>
<circle cx="298.0" cy="132.8" r="0.5" fill="#2e2e2e" opacity="0.55"/>
<circle cx="345.4" cy="81.1" r="0.7" fill="#2e2e2e" opacity="0.55"/>
<circle cx="436.8" cy="297.0" r="0.6" fill="#2e2e2e" opacity="0.55"/>
<circle cx="380.8" cy="273.5" r="0.9" fill="#2e2e2e" opacity="0.55"/>
<circle cx="347.1" cy="650.5" r="1.0" fill="#2e2e2e" opacity="0.55"/>
<circle cx="480.2" cy="155.4" r="0.6" fill="#2e2e2e" opacity="0.55"/>
<circle cx="583.8" cy="511.4" r="0.8" fill="#2e2e2e" opacity="0.55"/>
<circle cx="234.9" cy="177.0" r="0.8" fill="#2e2e2e" opacity="0.55"/>
<circle cx="369.4" cy="385.8" r="0.8" fill="#2e2e2e" opacity="0.55"/>
<circle cx="492.7" cy="123.8" r="0.6" fill="#2e2e2e" opacity="0.55"/>
<circle cx="640.7" cy="597.1" r="0.9" fill="#2e2e2e" opacity="0.55"/>
<circle cx="25.8" cy="39.6" r="0.6" fill="#2e2e2e" opacity="0.55"/>
<circle cx="278.1" cy="406.4" r="0.6" fill="#2e2e2e" opacity="0.55"/>
<circle cx="354.2" cy="47.3" r="0.5" fill="#2e2e2e" opacity="0.55"/>
<circle cx="442.3" cy="359.0" r="0.8" fill="#2e2e2e" opacity="0.55"/>
<circle cx="244.1" cy="312.0" r="0.6" fill="#2e2e2e" opacity="0.55"/>
<circle cx="224.8" cy="485.6" r="0.9" fill="#2e2e2e" opacity="0.55"/>
<circle cx="48.6" cy="78.1" r="0.9" fill="#2e2e2e" opacity="0.55"/>
<circle cx="407.9" cy="501.2" r="0.6" fill="#2e2e2e" opacity="0.55"/>
<circle cx="277.5" cy="168.3" r="0.9" fill="#2e2e2e" opacity="0.55"/>
<circle cx="241.3" cy="426.2" r="1.0" fill="#2e2e2e" opacity="0.55"/>
<circle cx="212.8" cy="357.7" r="0.9" fill="#2e2e2e" opacity="0.55"/>
<circle cx="602.2" cy="278.8" r="0.7" fill="#2e2e2e" opacity="0.55"/>
<circle cx="63.4" cy="570.6" r="0.5" fill="#2e2e2e" opacity="0.55"/>
<circle cx="54.3" cy="367.9" r="0.7" fill="#2e2e2e" opacity="0.55"/>
<circle cx="448.2" cy="194.9" r="0.9" fill="#2e2e2e" opacity="0.55"/>
<circle cx="49.8" cy="139.0" r="0.8" fill="#2e2e2e" opacity="0.55"/>
<ellipse cx="566.7" cy="155.0" rx="5" ry="1.8" transform="rotate(28 566.7 155.0)" fill="#1e1e1e"/>
<circle cx="391.8" cy="323.3" r="6" fill="none" stroke="#555" stroke-width="1.2"/>
<circle cx="265.1" cy="1.4" r="6" fill="none" stroke="#555" stroke-width="1.2"/>
</g>
<rect width="654" height="652" fill="url(#mh)"/>
</svg><!-- MICRO_END -->
</div>

<!-- ============ VPATF WINDOW ============ -->
<div class="a" style="left:730px;top:59px;width:970px;height:674px;background:#f0f0f0;box-shadow:0 0 0 1px #6d6d6d,-3px 4px 14px rgba(0,0,0,.3)">
<!-- VP_START --><div class="a" style="left:0px;top:0px;width:970px;height:31px;background:#fff"></div>
<svg class="a" style="left:9px;top:8px" width="14" height="14"><rect x="0.5" y="0.5" width="13" height="13" fill="#fff" stroke="#c8c8c8"/><rect x="1" y="5" width="4" height="5" fill="#c0282a"/><rect x="6" y="1" width="6" height="6" fill="#f3c21b"/><rect x="6" y="9" width="6" height="3" fill="#4d8ee3"/></svg>
<div class="t" style="left:29px;top:9px;font-size:12.5px;color:#000">VPATF [ver: 5.00]</div>
<svg class="a" style="left:956px;top:11px" width="10" height="10"><path d="M0.5 0.5L9.5 9.5M9.5 0.5L0.5 9.5" stroke="#333" stroke-width="1"/></svg>
<div class="a" style="left:15px;top:45px;width:13px;height:13px;border:1px solid #333;border-radius:50%;background:#fff"></div>
<div class="t" style="left:32px;top:46px;font-family:'Liberation Mono',monospace;font-size:10px;color:#000;font-size:10.5px;letter-spacing:-0.25px">In Focus</div>
<div class="a" style="left:92px;top:45px;width:13px;height:13px;border:1px solid #333;border-radius:50%;background:#fff"><div style="position:absolute;left:2px;top:2px;width:7px;height:7px;border-radius:50%;background:#333"></div></div>
<div class="t" style="left:109px;top:46px;font-family:'Liberation Mono',monospace;font-size:10px;color:#000;font-size:10.5px;letter-spacing:-0.25px">In Range</div>
<div class="a" style="left:169px;top:45px;width:13px;height:13px;border:1px solid #333;border-radius:50%;background:#fff"></div>
<div class="t" style="left:186px;top:46px;font-family:'Liberation Mono',monospace;font-size:10px;color:#000;font-size:10.5px;letter-spacing:-0.25px">Up Limit Sensor</div>
<div class="a" style="left:283px;top:45px;width:13px;height:13px;border:1px solid #333;border-radius:50%;background:#fff"></div>
<div class="t" style="left:300px;top:46px;font-family:'Liberation Mono',monospace;font-size:10px;color:#000;font-size:10.5px;letter-spacing:-0.25px">Down Limit Sensor</div>
<div class="a" style="left:414px;top:45px;width:13px;height:13px;border:1px solid #333;border-radius:50%;background:#fff"></div>
<div class="t" style="left:431px;top:46px;font-family:'Liberation Mono',monospace;font-size:10px;color:#000;font-size:10.5px;letter-spacing:-0.25px">Motor busy</div>
<div class="a" style="left:503px;top:45px;width:13px;height:13px;border:1px solid #333;border-radius:50%;background:#fff"></div>
<div class="t" style="left:520px;top:46px;font-family:'Liberation Mono',monospace;font-size:10px;color:#000;font-size:10.5px;letter-spacing:-0.25px">Auto Focus</div>
<div class="a" style="left:15px;top:67px;width:13px;height:13px;border:1px solid #333;border-radius:50%;background:#fff"></div>
<div class="t" style="left:32px;top:68px;font-family:'Liberation Mono',monospace;font-size:10px;color:#000;font-size:10.5px;letter-spacing:-0.25px">Home</div>
<div class="a" style="left:92px;top:69px;width:13px;height:13px;border:1px solid #333;border-radius:50%;background:#fff"></div>
<div class="t" style="left:109px;top:70px;font-family:'Liberation Mono',monospace;font-size:10px;color:#000;font-size:10.5px;letter-spacing:-0.25px">Error</div>
<!-- DK_START --><svg class="a" style="left:19px;top:89px" width="685" height="465" viewBox="0 0 685 465">
<defs><filter id="lb" x="-50%" y="-5%" width="200%" height="110%"><feGaussianBlur stdDeviation="0.8"/></filter><filter id="lb3" x="-100%" y="-10%" width="300%" height="120%"><feGaussianBlur stdDeviation="4"/></filter><filter id="lb2" x="-50%" y="-5%" width="200%" height="110%"><feGaussianBlur stdDeviation="1.1"/></filter><linearGradient id="glow" x1="0" x2="1"><stop offset="0" stop-color="#fff" stop-opacity="0"/><stop offset="0.5" stop-color="#fff" stop-opacity="0.05"/><stop offset="1" stop-color="#fff" stop-opacity="0"/></linearGradient></defs>
<rect width="685" height="465" fill="#090909"/>
<rect x="332" y="52" width="18" height="413" fill="#ffffff" opacity="0.07" filter="url(#lb3)"/>
<g filter="url(#lb)">
<path d="M337 66 Q336 56 339 56 Q341 58 340 66" stroke="#e0e0e0" stroke-width="2.8" fill="none"/>
<path d="M336.5 64 Q335.5 74 340 84" stroke="#e0e0e0" stroke-width="3" fill="none"/>
<path d="M335.8 80 Q336.5 89 341.8 97" stroke="#ececec" stroke-width="3.8" stroke-linecap="round" fill="none"/>
<path d="M341.6 96 L337 100" stroke="#8a8a8a" stroke-width="2"/>
<path d="M335.8 99.5 Q336.5 108.5 341.8 116.5" stroke="#ececec" stroke-width="3.8" stroke-linecap="round" fill="none"/>
<path d="M341.6 115.5 L337 119.5" stroke="#8a8a8a" stroke-width="2"/>
<path d="M335.8 119.0 Q336.5 128.0 341.8 136.0" stroke="#ececec" stroke-width="3.8" stroke-linecap="round" fill="none"/>
<path d="M341.6 135.0 L337 139.0" stroke="#8a8a8a" stroke-width="2"/>
<path d="M335.8 138.5 Q336.5 147.5 341.8 155.5" stroke="#ececec" stroke-width="3.8" stroke-linecap="round" fill="none"/>
<path d="M341.6 154.5 L337 158.5" stroke="#8a8a8a" stroke-width="2"/>
<path d="M335.8 158.0 Q336.5 167.0 341.8 175.0" stroke="#ececec" stroke-width="3.8" stroke-linecap="round" fill="none"/>
<path d="M341.6 174.0 L337 178.0" stroke="#8a8a8a" stroke-width="2"/>
<path d="M335.8 177.5 Q336.5 186.5 341.8 194.5" stroke="#ececec" stroke-width="3.8" stroke-linecap="round" fill="none"/>
<path d="M341.6 193.5 L337 197.5" stroke="#8a8a8a" stroke-width="2"/>
<path d="M335.8 197.0 Q336.5 206.0 341.8 214.0" stroke="#ececec" stroke-width="3.8" stroke-linecap="round" fill="none"/>
<path d="M341.6 213.0 L337 217.0" stroke="#8a8a8a" stroke-width="2"/>
<rect x="340.3" y="218" width="4.2" height="247" fill="#f4f4f4"/>
<rect x="338.5" y="214" width="8" height="251" fill="#ffffff" opacity="0.18"/>
</g><g filter="url(#lb2)">
<ellipse cx="339.1" cy="368.6" rx="2.0" ry="1.4" fill="rgb(125,125,125)"/>
<ellipse cx="341.9" cy="409.7" rx="2.0" ry="1.4" fill="rgb(105,105,105)"/>
<ellipse cx="344.4" cy="371.1" rx="1.8" ry="1.3" fill="rgb(115,115,115)"/>
<ellipse cx="356.8" cy="397.2" rx="2.0" ry="1.4" fill="rgb(64,64,64)"/>
<ellipse cx="348.6" cy="367.8" rx="1.7" ry="1.2" fill="rgb(46,46,46)"/>
<ellipse cx="350.8" cy="420.6" rx="1.2" ry="0.9" fill="rgb(120,120,120)"/>
<ellipse cx="344.5" cy="345.1" rx="1.5" ry="1.1" fill="rgb(121,121,121)"/>
<ellipse cx="335.3" cy="426.3" rx="2.4" ry="1.7" fill="rgb(136,136,136)"/>
<ellipse cx="336.9" cy="434.6" rx="1.9" ry="1.4" fill="rgb(62,62,62)"/>
<ellipse cx="346.0" cy="445.5" rx="1.3" ry="0.9" fill="rgb(62,62,62)"/>
<ellipse cx="342.7" cy="399.4" rx="2.2" ry="1.6" fill="rgb(83,83,83)"/>
<ellipse cx="349.3" cy="390.5" rx="2.3" ry="1.6" fill="rgb(118,118,118)"/>
<ellipse cx="338.2" cy="382.1" rx="2.4" ry="1.7" fill="rgb(132,132,132)"/>
<ellipse cx="340.2" cy="449.9" rx="1.2" ry="0.8" fill="rgb(80,80,80)"/>
<ellipse cx="341.8" cy="458.9" rx="2.3" ry="1.7" fill="rgb(114,114,114)"/>
<ellipse cx="340.8" cy="448.6" rx="1.9" ry="1.4" fill="rgb(136,136,136)"/>
<ellipse cx="334.6" cy="418.7" rx="1.5" ry="1.1" fill="rgb(60,60,60)"/>
<ellipse cx="333.7" cy="347.6" rx="2.3" ry="1.7" fill="rgb(106,106,106)"/>
<ellipse cx="344.3" cy="350.6" rx="1.3" ry="1.0" fill="rgb(82,82,82)"/>
<ellipse cx="338.9" cy="391.3" rx="1.7" ry="1.2" fill="rgb(60,60,60)"/>
<ellipse cx="342.0" cy="345.3" rx="2.1" ry="1.5" fill="rgb(87,87,87)"/>
<ellipse cx="342.2" cy="406.1" rx="2.4" ry="1.7" fill="rgb(80,80,80)"/>
<ellipse cx="346.6" cy="400.7" rx="1.2" ry="0.9" fill="rgb(121,121,121)"/>
<ellipse cx="343.0" cy="404.3" rx="2.4" ry="1.7" fill="rgb(97,97,97)"/>
<ellipse cx="342.5" cy="375.0" rx="2.5" ry="1.8" fill="rgb(88,88,88)"/>
<ellipse cx="349.4" cy="377.7" rx="2.5" ry="1.8" fill="rgb(93,93,93)"/>
<ellipse cx="345.8" cy="385.2" rx="2.3" ry="1.7" fill="rgb(132,132,132)"/>
<ellipse cx="340.0" cy="407.1" rx="2.0" ry="1.4" fill="rgb(109,109,109)"/>
<ellipse cx="338.6" cy="372.6" rx="2.4" ry="1.7" fill="rgb(100,100,100)"/>
<ellipse cx="338.0" cy="457.3" rx="1.8" ry="1.3" fill="rgb(115,115,115)"/>
<ellipse cx="346.0" cy="380.7" rx="1.6" ry="1.1" fill="rgb(93,93,93)"/>
<ellipse cx="330.9" cy="413.9" rx="2.0" ry="1.4" fill="rgb(52,52,52)"/>
<ellipse cx="341.1" cy="416.0" rx="2.4" ry="1.7" fill="rgb(122,122,122)"/>
<ellipse cx="346.4" cy="424.8" rx="2.2" ry="1.5" fill="rgb(47,47,47)"/>
<ellipse cx="343.8" cy="410.7" rx="1.6" ry="1.2" fill="rgb(125,125,125)"/>
<ellipse cx="342.8" cy="394.8" rx="1.9" ry="1.4" fill="rgb(85,85,85)"/>
<ellipse cx="345.8" cy="361.3" rx="2.3" ry="1.6" fill="rgb(78,78,78)"/>
<ellipse cx="349.5" cy="376.0" rx="1.6" ry="1.2" fill="rgb(48,48,48)"/>
<ellipse cx="342.1" cy="456.6" rx="1.8" ry="1.3" fill="rgb(128,128,128)"/>
<ellipse cx="341.0" cy="436.5" rx="1.5" ry="1.0" fill="rgb(68,68,68)"/>
<ellipse cx="341.9" cy="421.4" rx="2.0" ry="1.4" fill="rgb(87,87,87)"/>
<ellipse cx="341.5" cy="421.0" rx="1.4" ry="1.0" fill="rgb(66,66,66)"/>
<ellipse cx="342.9" cy="349.6" rx="1.9" ry="1.4" fill="rgb(79,79,79)"/>
<ellipse cx="340.1" cy="367.0" rx="1.3" ry="0.9" fill="rgb(112,112,112)"/>
<ellipse cx="339.8" cy="454.9" rx="1.9" ry="1.4" fill="rgb(80,80,80)"/>
<ellipse cx="350.3" cy="380.8" rx="2.3" ry="1.6" fill="rgb(55,55,55)"/>
<ellipse cx="341.8" cy="436.8" rx="1.5" ry="1.1" fill="rgb(79,79,79)"/>
<ellipse cx="344.8" cy="395.8" rx="2.0" ry="1.4" fill="rgb(82,82,82)"/>
<ellipse cx="335.0" cy="390.4" rx="1.3" ry="1.0" fill="rgb(45,45,45)"/>
<ellipse cx="348.1" cy="397.3" rx="2.3" ry="1.6" fill="rgb(124,124,124)"/>
<ellipse cx="333.6" cy="458.4" rx="2.4" ry="1.7" fill="rgb(73,73,73)"/>
<ellipse cx="347.1" cy="343.9" rx="1.8" ry="1.3" fill="rgb(129,129,129)"/>
<ellipse cx="348.1" cy="429.8" rx="2.4" ry="1.7" fill="rgb(53,53,53)"/>
<ellipse cx="341.8" cy="443.0" rx="2.5" ry="1.8" fill="rgb(60,60,60)"/>
<ellipse cx="351.7" cy="437.2" rx="2.1" ry="1.5" fill="rgb(70,70,70)"/>
<ellipse cx="345.5" cy="447.6" rx="2.4" ry="1.7" fill="rgb(118,118,118)"/>
<ellipse cx="340.9" cy="345.9" rx="1.8" ry="1.3" fill="rgb(75,75,75)"/>
<ellipse cx="343.3" cy="419.5" rx="1.9" ry="1.3" fill="rgb(97,97,97)"/>
<ellipse cx="344.8" cy="346.4" rx="1.3" ry="0.9" fill="rgb(114,114,114)"/>
<ellipse cx="341.9" cy="397.3" rx="2.2" ry="1.6" fill="rgb(90,90,90)"/>
<ellipse cx="349.3" cy="366.5" rx="1.3" ry="0.9" fill="rgb(75,75,75)"/>
<ellipse cx="349.1" cy="435.0" rx="2.4" ry="1.7" fill="rgb(61,61,61)"/>
<ellipse cx="348.9" cy="438.8" rx="2.3" ry="1.7" fill="rgb(51,51,51)"/>
<ellipse cx="343.3" cy="430.8" rx="1.5" ry="1.0" fill="rgb(124,124,124)"/>
<ellipse cx="338.8" cy="403.3" rx="2.2" ry="1.6" fill="rgb(45,45,45)"/>
<ellipse cx="345.2" cy="442.8" rx="2.2" ry="1.6" fill="rgb(50,50,50)"/>
<ellipse cx="353.4" cy="355.0" rx="2.3" ry="1.7" fill="rgb(56,56,56)"/>
<ellipse cx="347.7" cy="401.8" rx="1.8" ry="1.3" fill="rgb(65,65,65)"/>
<ellipse cx="339.4" cy="377.7" rx="1.9" ry="1.4" fill="rgb(91,91,91)"/>
<ellipse cx="347.9" cy="371.8" rx="2.5" ry="1.8" fill="rgb(99,99,99)"/>
<ellipse cx="336.7" cy="354.9" rx="1.7" ry="1.2" fill="rgb(55,55,55)"/>
<ellipse cx="340.7" cy="408.0" rx="1.2" ry="0.8" fill="rgb(103,103,103)"/>
<ellipse cx="343.8" cy="412.5" rx="2.2" ry="1.6" fill="rgb(124,124,124)"/>
<ellipse cx="339.0" cy="446.4" rx="1.2" ry="0.9" fill="rgb(125,125,125)"/>
<ellipse cx="341.7" cy="399.5" rx="2.1" ry="1.5" fill="rgb(103,103,103)"/>
<ellipse cx="338.8" cy="342.2" rx="1.4" ry="1.0" fill="rgb(79,79,79)"/>
<ellipse cx="347.0" cy="423.4" rx="1.7" ry="1.2" fill="rgb(48,48,48)"/>
<ellipse cx="344.9" cy="452.4" rx="1.6" ry="1.2" fill="rgb(116,116,116)"/>
<ellipse cx="342.6" cy="434.9" rx="1.3" ry="0.9" fill="rgb(138,138,138)"/>
<ellipse cx="347.7" cy="419.5" rx="2.4" ry="1.7" fill="rgb(93,93,93)"/>
<ellipse cx="342.4" cy="420.1" rx="1.3" ry="0.9" fill="rgb(120,120,120)"/>
<ellipse cx="337.6" cy="426.0" rx="1.8" ry="1.3" fill="rgb(75,75,75)"/>
<ellipse cx="344.8" cy="432.9" rx="1.3" ry="0.9" fill="rgb(93,93,93)"/>
<ellipse cx="343.5" cy="361.5" rx="1.2" ry="0.8" fill="rgb(60,60,60)"/>
<ellipse cx="346.6" cy="343.1" rx="2.1" ry="1.5" fill="rgb(81,81,81)"/>
<ellipse cx="346.2" cy="409.5" rx="2.2" ry="1.6" fill="rgb(49,49,49)"/>
<ellipse cx="338.3" cy="459.5" rx="1.5" ry="1.0" fill="rgb(115,115,115)"/>
<ellipse cx="341.0" cy="429.9" rx="2.4" ry="1.7" fill="rgb(52,52,52)"/>
<ellipse cx="344.8" cy="406.0" rx="1.2" ry="0.9" fill="rgb(68,68,68)"/>
<ellipse cx="341.1" cy="417.5" rx="1.8" ry="1.3" fill="rgb(134,134,134)"/>
<ellipse cx="339.8" cy="430.4" rx="1.7" ry="1.2" fill="rgb(89,89,89)"/>
<ellipse cx="345.5" cy="406.8" rx="2.5" ry="1.8" fill="rgb(93,93,93)"/>
<ellipse cx="347.3" cy="400.0" rx="2.2" ry="1.5" fill="rgb(65,65,65)"/>
<ellipse cx="342.3" cy="389.8" rx="1.9" ry="1.4" fill="rgb(119,119,119)"/>
<ellipse cx="338.2" cy="420.9" rx="2.0" ry="1.4" fill="rgb(64,64,64)"/>
<ellipse cx="342.5" cy="359.5" rx="1.8" ry="1.3" fill="rgb(106,106,106)"/>
<ellipse cx="338.5" cy="450.0" rx="2.1" ry="1.5" fill="rgb(68,68,68)"/>
<ellipse cx="342.5" cy="356.4" rx="2.2" ry="1.6" fill="rgb(63,63,63)"/>
<ellipse cx="341.8" cy="410.3" rx="2.1" ry="1.5" fill="rgb(82,82,82)"/>
<ellipse cx="345.8" cy="420.6" rx="2.3" ry="1.7" fill="rgb(121,121,121)"/>
<ellipse cx="340.1" cy="442.4" rx="1.4" ry="1.0" fill="rgb(47,47,47)"/>
<ellipse cx="341.3" cy="372.2" rx="2.2" ry="1.6" fill="rgb(70,70,70)"/>
<ellipse cx="340.6" cy="360.7" rx="2.2" ry="1.6" fill="rgb(63,63,63)"/>
<ellipse cx="345.8" cy="390.2" rx="2.1" ry="1.5" fill="rgb(134,134,134)"/>
<ellipse cx="335.2" cy="411.9" rx="2.3" ry="1.6" fill="rgb(116,116,116)"/>
<ellipse cx="344.6" cy="343.3" rx="2.5" ry="1.8" fill="rgb(54,54,54)"/>
<ellipse cx="337.5" cy="442.8" rx="2.5" ry="1.8" fill="rgb(104,104,104)"/>
<ellipse cx="347.0" cy="449.3" rx="2.4" ry="1.7" fill="rgb(127,127,127)"/>
<ellipse cx="338.2" cy="426.1" rx="2.3" ry="1.7" fill="rgb(75,75,75)"/>
<ellipse cx="333.5" cy="446.8" rx="2.2" ry="1.6" fill="rgb(62,62,62)"/>
<ellipse cx="340.7" cy="362.5" rx="2.4" ry="1.7" fill="rgb(77,77,77)"/>
<ellipse cx="335.0" cy="360.4" rx="1.2" ry="0.8" fill="rgb(68,68,68)"/>
<ellipse cx="342.8" cy="390.8" rx="1.2" ry="0.9" fill="rgb(82,82,82)"/>
<ellipse cx="341.2" cy="344.3" rx="1.8" ry="1.3" fill="rgb(138,138,138)"/>
<ellipse cx="346.8" cy="421.1" rx="1.7" ry="1.2" fill="rgb(107,107,107)"/>
<ellipse cx="343.2" cy="349.4" rx="2.0" ry="1.4" fill="rgb(140,140,140)"/>
<ellipse cx="338.9" cy="454.6" rx="1.3" ry="0.9" fill="rgb(80,80,80)"/>
<ellipse cx="346.3" cy="349.1" rx="1.7" ry="1.2" fill="rgb(101,101,101)"/>
<ellipse cx="344.6" cy="446.5" rx="2.4" ry="1.7" fill="rgb(92,92,92)"/>
<ellipse cx="342.0" cy="421.4" rx="1.6" ry="1.2" fill="rgb(102,102,102)"/>
<ellipse cx="340.3" cy="375.5" rx="2.2" ry="1.6" fill="rgb(78,78,78)"/>
<ellipse cx="337.5" cy="352.9" rx="2.4" ry="1.7" fill="rgb(88,88,88)"/>
<ellipse cx="341.0" cy="420.7" rx="1.8" ry="1.3" fill="rgb(90,90,90)"/>
<ellipse cx="342.5" cy="347.1" rx="1.5" ry="1.1" fill="rgb(138,138,138)"/>
<ellipse cx="345.5" cy="408.0" rx="2.0" ry="1.4" fill="rgb(67,67,67)"/>
<ellipse cx="348.5" cy="384.5" rx="2.4" ry="1.7" fill="rgb(103,103,103)"/>
<ellipse cx="345.1" cy="354.8" rx="1.6" ry="1.1" fill="rgb(137,137,137)"/>
<ellipse cx="342.0" cy="418.0" rx="1.7" ry="1.2" fill="rgb(83,83,83)"/>
<ellipse cx="339.5" cy="417.7" rx="1.4" ry="1.0" fill="rgb(53,53,53)"/>
<ellipse cx="344.0" cy="352.9" rx="1.4" ry="1.0" fill="rgb(115,115,115)"/>
<ellipse cx="342.7" cy="405.2" rx="1.5" ry="1.1" fill="rgb(94,94,94)"/>
<ellipse cx="339.0" cy="346.4" rx="1.3" ry="0.9" fill="rgb(106,106,106)"/>
<ellipse cx="343.1" cy="400.6" rx="1.6" ry="1.2" fill="rgb(87,87,87)"/>
<ellipse cx="350.2" cy="453.4" rx="1.7" ry="1.2" fill="rgb(53,53,53)"/>
<ellipse cx="344.2" cy="382.3" rx="1.5" ry="1.1" fill="rgb(57,57,57)"/>
<ellipse cx="341.3" cy="421.8" rx="1.9" ry="1.4" fill="rgb(138,138,138)"/>
<ellipse cx="341.3" cy="353.5" rx="2.1" ry="1.5" fill="rgb(95,95,95)"/>
<ellipse cx="337.9" cy="437.9" rx="2.2" ry="1.5" fill="rgb(120,120,120)"/>
<ellipse cx="347.8" cy="412.9" rx="1.9" ry="1.3" fill="rgb(66,66,66)"/>
<ellipse cx="337.2" cy="408.2" rx="1.4" ry="1.0" fill="rgb(77,77,77)"/>
<ellipse cx="340.8" cy="384.4" rx="1.7" ry="1.2" fill="rgb(97,97,97)"/>
<ellipse cx="350.8" cy="453.9" rx="1.7" ry="1.2" fill="rgb(115,115,115)"/>
<ellipse cx="341.2" cy="448.7" rx="1.9" ry="1.3" fill="rgb(135,135,135)"/>
<ellipse cx="347.6" cy="375.9" rx="2.3" ry="1.7" fill="rgb(106,106,106)"/>
<ellipse cx="345.2" cy="343.6" rx="1.3" ry="0.9" fill="rgb(129,129,129)"/>
<ellipse cx="348.5" cy="368.1" rx="1.4" ry="1.0" fill="rgb(125,125,125)"/>
<ellipse cx="344.8" cy="395.3" rx="1.2" ry="0.8" fill="rgb(109,109,109)"/>
<ellipse cx="347.8" cy="451.1" rx="2.4" ry="1.7" fill="rgb(59,59,59)"/>
<ellipse cx="351.6" cy="407.9" rx="1.3" ry="0.9" fill="rgb(56,56,56)"/>
<ellipse cx="340.7" cy="414.8" rx="1.2" ry="0.9" fill="rgb(91,91,91)"/>
</g>
<rect x="0" y="231" width="685" height="1.2" fill="#151d0e"/>
<rect x="342" y="0" width="1" height="465" fill="#17250f"/>
<rect x="134.5" y="43.5" width="440.0" height="413.0" fill="none" stroke="#f4ee00" stroke-width="2.2"/>
<text x="22" y="33" style="font-family:Liberation Sans,sans-serif;font-size:13px;fill:#4ec12a">Sensor: 247</text>
<text x="582" y="33" style="font-family:Liberation Sans,sans-serif;font-size:13px;fill:#4ec12a">K:-0.011375</text>
<text x="582" y="52.5" style="font-family:Liberation Sans,sans-serif;font-size:13px;fill:#4ec12a">B:399.219727</text>
<text x="582" y="92.5" style="font-family:Liberation Sans,sans-serif;font-size:13px;fill:#4ec12a">K0:-0.011375</text>
<text x="582" y="112" style="font-family:Liberation Sans,sans-serif;font-size:13px;fill:#4ec12a">B0:389.497925</text>
</svg><!-- DK_END -->
<div class="t" style="left:31px;top:573px;font-family:'Liberation Mono',monospace;font-size:10px;color:#000;font-size:11px;letter-spacing:-0.6px">Substrate</div>
<div class="a" style="left:103px;top:569px;width:83px;height:20px;background:#e5e5e5;border:1px solid #adadad"><div class="t" style="left:6px;top:4px;font-family:'Liberation Mono',monospace;font-size:10px;color:#000;font-size:11px;letter-spacing:-0.6px;color:#000">Area</div><svg class="a" style="right:5px;top:7px" width="10" height="6"><path d="M0.5 0.5L5 5L9.5 0.5" stroke="#333" fill="none" stroke-width="1.2"/></svg></div>
<div class="t" style="left:207px;top:572px;font-family:'Liberation Mono',monospace;font-size:10px;color:#000;font-size:11px;letter-spacing:-0.6px">InsPlateType</div>
<div class="a" style="left:283px;top:568px;width:111px;height:20px;background:#cccccc;border:1px solid #c6c6c6"><div class="t" style="left:6px;top:4px;font-family:'Liberation Mono',monospace;font-size:10px;color:#000;font-size:11px;letter-spacing:-0.6px;color:#8a8a8a">Transp glass</div><svg class="a" style="right:5px;top:7px" width="10" height="6"><path d="M0.5 0.5L5 5L9.5 0.5" stroke="#9a9a9a" fill="none" stroke-width="1.2"/></svg></div>
<div class="a" style="left:417px;top:570px;width:13px;height:13px;border:1px solid #333;border-radius:50%;background:#fff"></div>
<div class="t" style="left:434px;top:572px;font-family:'Liberation Mono',monospace;font-size:10px;color:#000;font-size:11px;letter-spacing:-0.6px">Auto exposure</div>
<div class="a" style="left:525px;top:566px;width:94px;height:22px;border:1px solid #b9b9b9;background:#e3e3e3"></div>
<div class="a" style="left:627px;top:567px;width:76px;height:21px;background:#e1e1e1;border:1px solid #adadad;display:flex;align-items:center;justify-content:center;text-align:center;font-family:'Liberation Mono',monospace;font-size:10px;color:#000;font-size:11px;letter-spacing:-0.6px;line-height:14px;padding-bottom:2px;color:#000;">save img</div>
<div class="a" style="left:32px;top:601px;width:65px;height:45px;background:#e1e1e1;border:1px solid #adadad;display:flex;align-items:center;justify-content:center;text-align:center;font-family:'Liberation Mono',monospace;font-size:10px;color:#000;font-size:11px;letter-spacing:-0.6px;line-height:14px;padding-bottom:2px;color:#000;">ROI</div>
<div class="a" style="left:119px;top:601px;width:57px;height:45px;background:#cccccc;border:1px solid #bfbfbf;display:flex;align-items:center;justify-content:center;text-align:center;font-family:'Liberation Mono',monospace;font-size:10px;color:#000;font-size:11px;letter-spacing:-0.6px;line-height:14px;padding-bottom:2px;color:#f4f4f4;text-shadow:1px 1px 0 #a0a0a0;">Refresh</div>
<div class="a" style="left:198px;top:601px;width:60px;height:45px;background:#e1e1e1;border:1px solid #adadad;display:flex;align-items:center;justify-content:center;text-align:center;font-family:'Liberation Mono',monospace;font-size:10px;color:#000;font-size:11px;letter-spacing:-0.6px;line-height:14px;padding-bottom:2px;color:#000;">SetROI</div>
<div class="a" style="left:281px;top:601px;width:58px;height:45px;background:#e1e1e1;border:1px solid #adadad;display:flex;align-items:center;justify-content:center;text-align:center;font-family:'Liberation Mono',monospace;font-size:10px;color:#000;font-size:11px;letter-spacing:-0.6px;line-height:14px;padding-bottom:2px;color:#000;">Make0</div>
<div class="a" style="left:361px;top:602px;width:58px;height:44px;background:#e1e1e1;border:1px solid #adadad;display:flex;align-items:center;justify-content:center;text-align:center;font-family:'Liberation Mono',monospace;font-size:10px;color:#000;font-size:11px;letter-spacing:-0.6px;line-height:14px;padding-bottom:2px;color:#000;">UPRange</div>
<div class="a" style="left:441px;top:601px;width:51px;height:45px;background:#e1e1e1;border:1px solid #adadad;display:flex;align-items:center;justify-content:center;text-align:center;font-family:'Liberation Mono',monospace;font-size:10px;color:#000;font-size:11px;letter-spacing:-0.6px;line-height:14px;padding-bottom:2px;color:#000;">Start<br>Focus</div>
<div class="a" style="left:514px;top:601px;width:82px;height:45px;background:#cccccc;border:1px solid #bfbfbf;display:flex;align-items:center;justify-content:center;text-align:center;font-family:'Liberation Mono',monospace;font-size:10px;color:#000;font-size:11px;letter-spacing:-0.6px;line-height:14px;padding-bottom:2px;color:#f4f4f4;text-shadow:1px 1px 0 #a0a0a0;">Open laser</div>
<div class="a" style="left:618px;top:600px;width:82px;height:45px;background:#cccccc;border:1px solid #bfbfbf;display:flex;align-items:center;justify-content:center;text-align:center;font-family:'Liberation Mono',monospace;font-size:10px;color:#000;font-size:11px;letter-spacing:-0.6px;line-height:14px;padding-bottom:2px;color:#f4f4f4;text-shadow:1px 1px 0 #a0a0a0;">Close laser</div>
<div class="a" style="left:0px;top:652px;width:711px;height:1px;background:#d7d7d7"></div>
<div class="t" style="left:5px;top:657px;font-size:12.5px;color:#000">Ready&nbsp;&nbsp;x:23, y:566</div>
<div class="a" style="left:710px;top:89px;width:260px;height:573px;border:1px solid #dadada;background:#fff"></div>
<div class="a" style="left:714px;top:89px;width:260px;height:569px;background:#c0c0c0"></div>
<div class="a" style="left:712px;top:69px;width:46px;height:20px;background:#f0f0f0;border:1px solid #d9d9d9;border-bottom:none"><div class="t" style="left:5px;top:5px;font-family:'Liberation Mono',monospace;font-size:10px;color:#000;font-size:11px;letter-spacing:-0.6px">Set</div></div>
<div class="a" style="left:758px;top:67px;width:58px;height:22px;background:#fff;border:1px solid #d9d9d9;border-bottom:none"><div class="t" style="left:6px;top:4px;font-family:'Liberation Mono',monospace;font-size:10px;color:#000;font-size:11px;letter-spacing:-0.6px">Control</div></div>
<div class="a" style="left:727px;top:102px;width:260px;height:71px;border:1px solid #e0e0e0;border-radius:1px"></div>
<div class="t" style="left:734px;top:96px;font-family:'Liberation Mono',monospace;font-size:10px;color:#000;font-size:11px;letter-spacing:-0.6px;background:#c0c0c0;padding:0 1px">LinearSet</div>
<div class="a" style="left:738px;top:116px;width:87px;height:38px;background:#e1e1e1;border:1px solid #adadad;display:flex;align-items:center;justify-content:center;text-align:center;font-family:'Liberation Mono',monospace;font-size:10px;color:#000;font-size:11px;letter-spacing:-0.6px;line-height:14px;padding-bottom:2px;color:#000;">LinearSet</div>
<div class="a" style="left:727px;top:188px;width:260px;height:98px;border:1px solid #e0e0e0;border-radius:1px"></div>
<div class="t" style="left:734px;top:182px;font-family:'Liberation Mono',monospace;font-size:10px;color:#000;font-size:11px;letter-spacing:-0.6px;background:#c0c0c0;padding:0 1px">Laser line fitting</div>
<div class="a" style="left:748px;top:212px;width:13px;height:13px;border:1px solid #333;border-radius:50%;background:#fff"></div>
<div class="t" style="left:764px;top:213px;font-family:'Liberation Mono',monospace;font-size:10px;color:#000;font-size:11px;letter-spacing:-0.6px">Make0 Position</div>
<div class="a" style="left:748px;top:244px;width:13px;height:13px;border:1px solid #333;border-radius:50%;background:#fff"></div>
<div class="t" style="left:764px;top:245px;font-family:'Liberation Mono',monospace;font-size:10px;color:#000;font-size:11px;letter-spacing:-0.6px">Real Time Position</div>
<div class="a" style="left:723px;top:313px;width:235px;height:317px;border:1px solid #e0e0e0;border-radius:1px"></div>
<div class="t" style="left:730px;top:307px;font-family:'Liberation Mono',monospace;font-size:10px;color:#000;font-size:11px;letter-spacing:-0.6px;background:#c0c0c0;padding:0 1px">Z axis control</div>
<div class="t" style="left:730px;top:346px;font-family:'Liberation Mono',monospace;font-size:10px;color:#000;font-size:11px;letter-spacing:-0.6px">current position</div>
<div class="t" style="left:850px;top:346px;font-family:'Liberation Mono',monospace;font-size:10px;color:#000;font-size:11px">0</div>
<div class="t" style="left:930px;top:347px;font-family:'Liberation Mono',monospace;font-size:10px;color:#000;font-size:10px;letter-spacing:-0.6px">mm</div>
<div class="t" style="left:795px;top:394px;font-family:'Liberation Mono',monospace;font-size:10px;color:#000;font-size:11px;letter-spacing:-0.6px">Move</div>
<div class="a" style="left:848px;top:387px;width:75px;height:21px;background:#fff;border:1px solid #7a7a7a"></div>
<div class="t" style="left:930px;top:392px;font-family:'Liberation Mono',monospace;font-size:10px;color:#000;font-size:10px;letter-spacing:-0.6px">mm</div>
<div class="a" style="left:757px;top:440px;width:65px;height:45px;background:#e1e1e1;border:1px solid #adadad;display:flex;align-items:center;justify-content:center;text-align:center;font-family:'Liberation Mono',monospace;font-size:10px;color:#000;font-size:11px;letter-spacing:-0.6px;line-height:14px;padding-bottom:2px;color:#000;">Up</div>
<div class="a" style="left:848px;top:450px;width:75px;height:20px;background:#fff;border:1px solid #7a7a7a"><div class="t" style="left:2px;top:3px;font-family:'Liberation Mono',monospace;font-size:10px;color:#000;font-size:11px">1</div><svg class="a" style="right:5px;top:7px" width="10" height="6"><path d="M0.5 0.5L5 5L9.5 0.5" stroke="#333" fill="none" stroke-width="1.2"/></svg></div>
<div class="t" style="left:930px;top:455px;font-family:'Liberation Mono',monospace;font-size:10px;color:#000;font-size:10px;letter-spacing:-0.6px">um</div>
<div class="a" style="left:757px;top:497px;width:65px;height:45px;background:#e1e1e1;border:1px solid #adadad;display:flex;align-items:center;justify-content:center;text-align:center;font-family:'Liberation Mono',monospace;font-size:10px;color:#000;font-size:11px;letter-spacing:-0.6px;line-height:14px;padding-bottom:2px;color:#000;">Stop</div>
<div class="a" style="left:849px;top:497px;width:65px;height:45px;background:#e1e1e1;border:1px solid #adadad;display:flex;align-items:center;justify-content:center;text-align:center;font-family:'Liberation Mono',monospace;font-size:10px;color:#000;font-size:11px;letter-spacing:-0.6px;line-height:14px;padding-bottom:2px;color:#000;">Home</div>
<div class="a" style="left:757px;top:556px;width:65px;height:45px;background:#e1e1e1;border:1px solid #adadad;display:flex;align-items:center;justify-content:center;text-align:center;font-family:'Liberation Mono',monospace;font-size:10px;color:#000;font-size:11px;letter-spacing:-0.6px;line-height:14px;padding-bottom:2px;color:#000;border:2px solid #0078d7">Down</div><!-- VP_END -->
</div>

<!-- OV_START --><div class="a" style="left:1637px;top:699px;width:60px;height:81px;background:#2b2b2b"><svg class="a" style="left:16px;top:16px" width="14" height="14"><circle cx="7" cy="4.5" r="3.6" stroke="#ccc" stroke-width="1.3" fill="none"/><path d="M1 13.5Q1 8.5 7 8.5Q13 8.5 13 13.5" stroke="#ccc" stroke-width="1.3" fill="none"/></svg><div class="t" style="left:35px;top:16px;font-size:14px;color:#fff">15.</div><svg class="a" style="left:16px;top:44px" width="26" height="22"><path d="M2 1.5H24V16H10L5 20V16H2Z" stroke="#ddd" stroke-width="1.6" fill="none"/><circle cx="8" cy="9" r="1.5" fill="#ddd"/><circle cx="13" cy="9" r="1.5" fill="#ddd"/><circle cx="18" cy="9" r="1.5" fill="#ddd"/></svg></div>
<div class="a" style="left:1513px;top:838px;width:40px;height:33px;border-radius:17px 0 0 17px;background:linear-gradient(90deg,#6aa0f8,#3573ef)"><svg class="a" style="left:9px;top:10px" width="9" height="14"><path d="M2 1L7 7L2 13" stroke="#fff" stroke-width="2" fill="none"/></svg></div>
<div class="a" style="left:1537px;top:838px;width:160px;height:109px;background:#fff;box-shadow:-3px 0 8px rgba(0,0,0,.18)"></div>
<svg class="a" style="left:1552px;top:847px" width="18" height="17"><path d="M8 2L17 0L15 9L9 10Z" fill="#2cd0d6"/><path d="M0 6L12 4L11 9L8 9.5L6 16L2 16L4 10L0 10.5Z" fill="#1a6df2"/></svg>
<div class="t" style="left:1572px;top:847px;font-size:15px;color:#2b6ff0">ToDesk</div>
<svg class="a" style="left:1556px;top:886px" width="62" height="61"><path d="M7 23L16 12L24 4L30 2L40 6L41 10L34 11L29 13L24 19L21 29L19 39L16 42L14 34L12 41L7 36L10 26Z" fill="#000"/><ellipse cx="34" cy="31" rx="10" ry="13" transform="rotate(-25 34 31)" fill="none" stroke="#111" stroke-width="1.1"/><circle cx="36" cy="19" r="1.4" fill="#111"/><circle cx="29" cy="32" r="1.4" fill="#111"/><path d="M27 42Q31 46 35 42" stroke="#111" stroke-width="1.2" fill="none"/><path d="M22 46Q31 60 43 47M20 47L16 61M43 46L50 61M8 61Q6 50 14 46M44 18Q48 24 46 32M48 21Q51 27 50 33" stroke="#111" stroke-width="1.1" fill="none"/><path d="M22 61Q26 56 30 61M32 61Q36 56 40 61" stroke="#111" stroke-width="2" fill="none"/><circle cx="54" cy="56" r="7" fill="#22c6a2"/><path d="M50 53V59M58 53V59M50 53H52M50 59H52M58 53H56M58 59H56" stroke="#fff" stroke-width="1.2"/></svg>
<div class="t" style="left:1633px;top:893px;font-size:15px;font-weight:bold;color:#333">七爷的张</div>
<div class="t" style="left:1632px;top:915px;font-size:12.5px;color:#888">设备代码:</div>
<div class="t" style="left:1632px;top:933px;font-size:12.5px;color:#888">版本: V4.7</div><!-- OV_END -->
</body></html>
